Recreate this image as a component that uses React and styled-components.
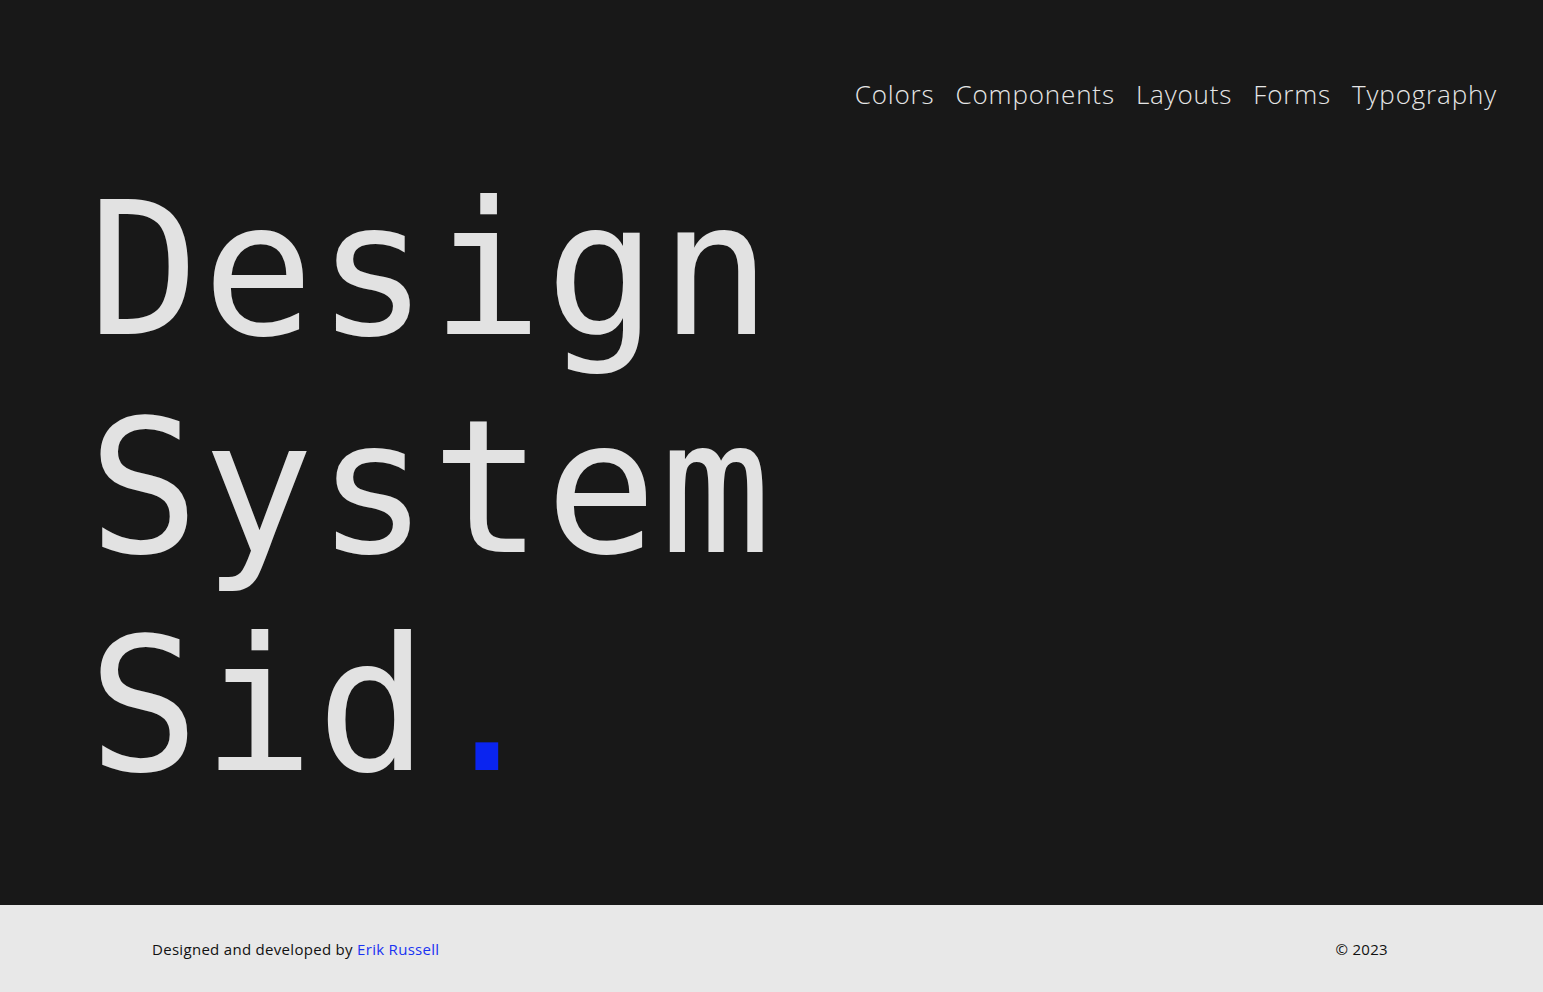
import React from "react";
import styled, { createGlobalStyle } from "styled-components";

const GlobalStyle = createGlobalStyle`
  html, body {
    margin: 0;
    padding: 0;
    background: #181818;
  }
  * {
    box-sizing: border-box;
  }
`;

const Page = styled.div`
  display: flex;
  flex-direction: column;
  min-height: 992px;
`;

const Main = styled.main`
  height: 905px;
  background: #181818;
  display: flex;
  flex-direction: column;
`;

const Header = styled.header`
  display: flex;
  justify-content: flex-end;
  padding: 76px 46px 0 0;
`;

const Nav = styled.nav`
  display: flex;
  gap: 21px;
`;

const NavLink = styled.a`
  font-family: "Open Sans", "Noto Sans", sans-serif;
  font-weight: 300;
  font-size: 26px;
  line-height: 36px;
  letter-spacing: 0.85px;
  color: #e6e6e6;
  text-decoration: none;
  cursor: pointer;
`;

const Hero = styled.section`
  padding: 49px 0 0 88px;
`;

const Title = styled.h1`
  margin: 0;
  font-family: "DejaVu Sans Mono", "Liberation Mono", monospace;
  font-weight: 400;
  font-size: 185px;
  line-height: 218px;
  letter-spacing: 3px;
  color: #e2e2e2;
`;

const Dot = styled.span`
  color: #0a24f0;
`;

const Footer = styled.footer`
  height: 87px;
  background: #e8e8e8;
  display: flex;
  align-items: center;
  justify-content: space-between;
  padding: 0 155px 0 152px;
  font-family: "Open Sans", "Noto Sans", sans-serif;
  font-size: 15px;
  letter-spacing: 0.3px;
  color: #111;
`;

const Credit = styled.span``;

const Author = styled.a`
  color: #1a33f2;
  text-decoration: none;
`;

const links = ["Colors", "Components", "Layouts", "Forms", "Typography"];

const App = () => {
  return (
    <>
      <GlobalStyle />
      <Page>
        <Main>
          <Header>
            <Nav>
              {links.map((l) => (
                <NavLink key={l}>{l}</NavLink>
              ))}
            </Nav>
          </Header>
          <Hero>
            <Title>
              Design
              <br />
              System
              <br />
              Sid<Dot>.</Dot>
            </Title>
          </Hero>
        </Main>
        <Footer>
          <Credit>
            Designed and developed by <Author>Erik Russell</Author>
          </Credit>
          <span>© 2023</span>
        </Footer>
      </Page>
    </>
  );
};

export default App;
